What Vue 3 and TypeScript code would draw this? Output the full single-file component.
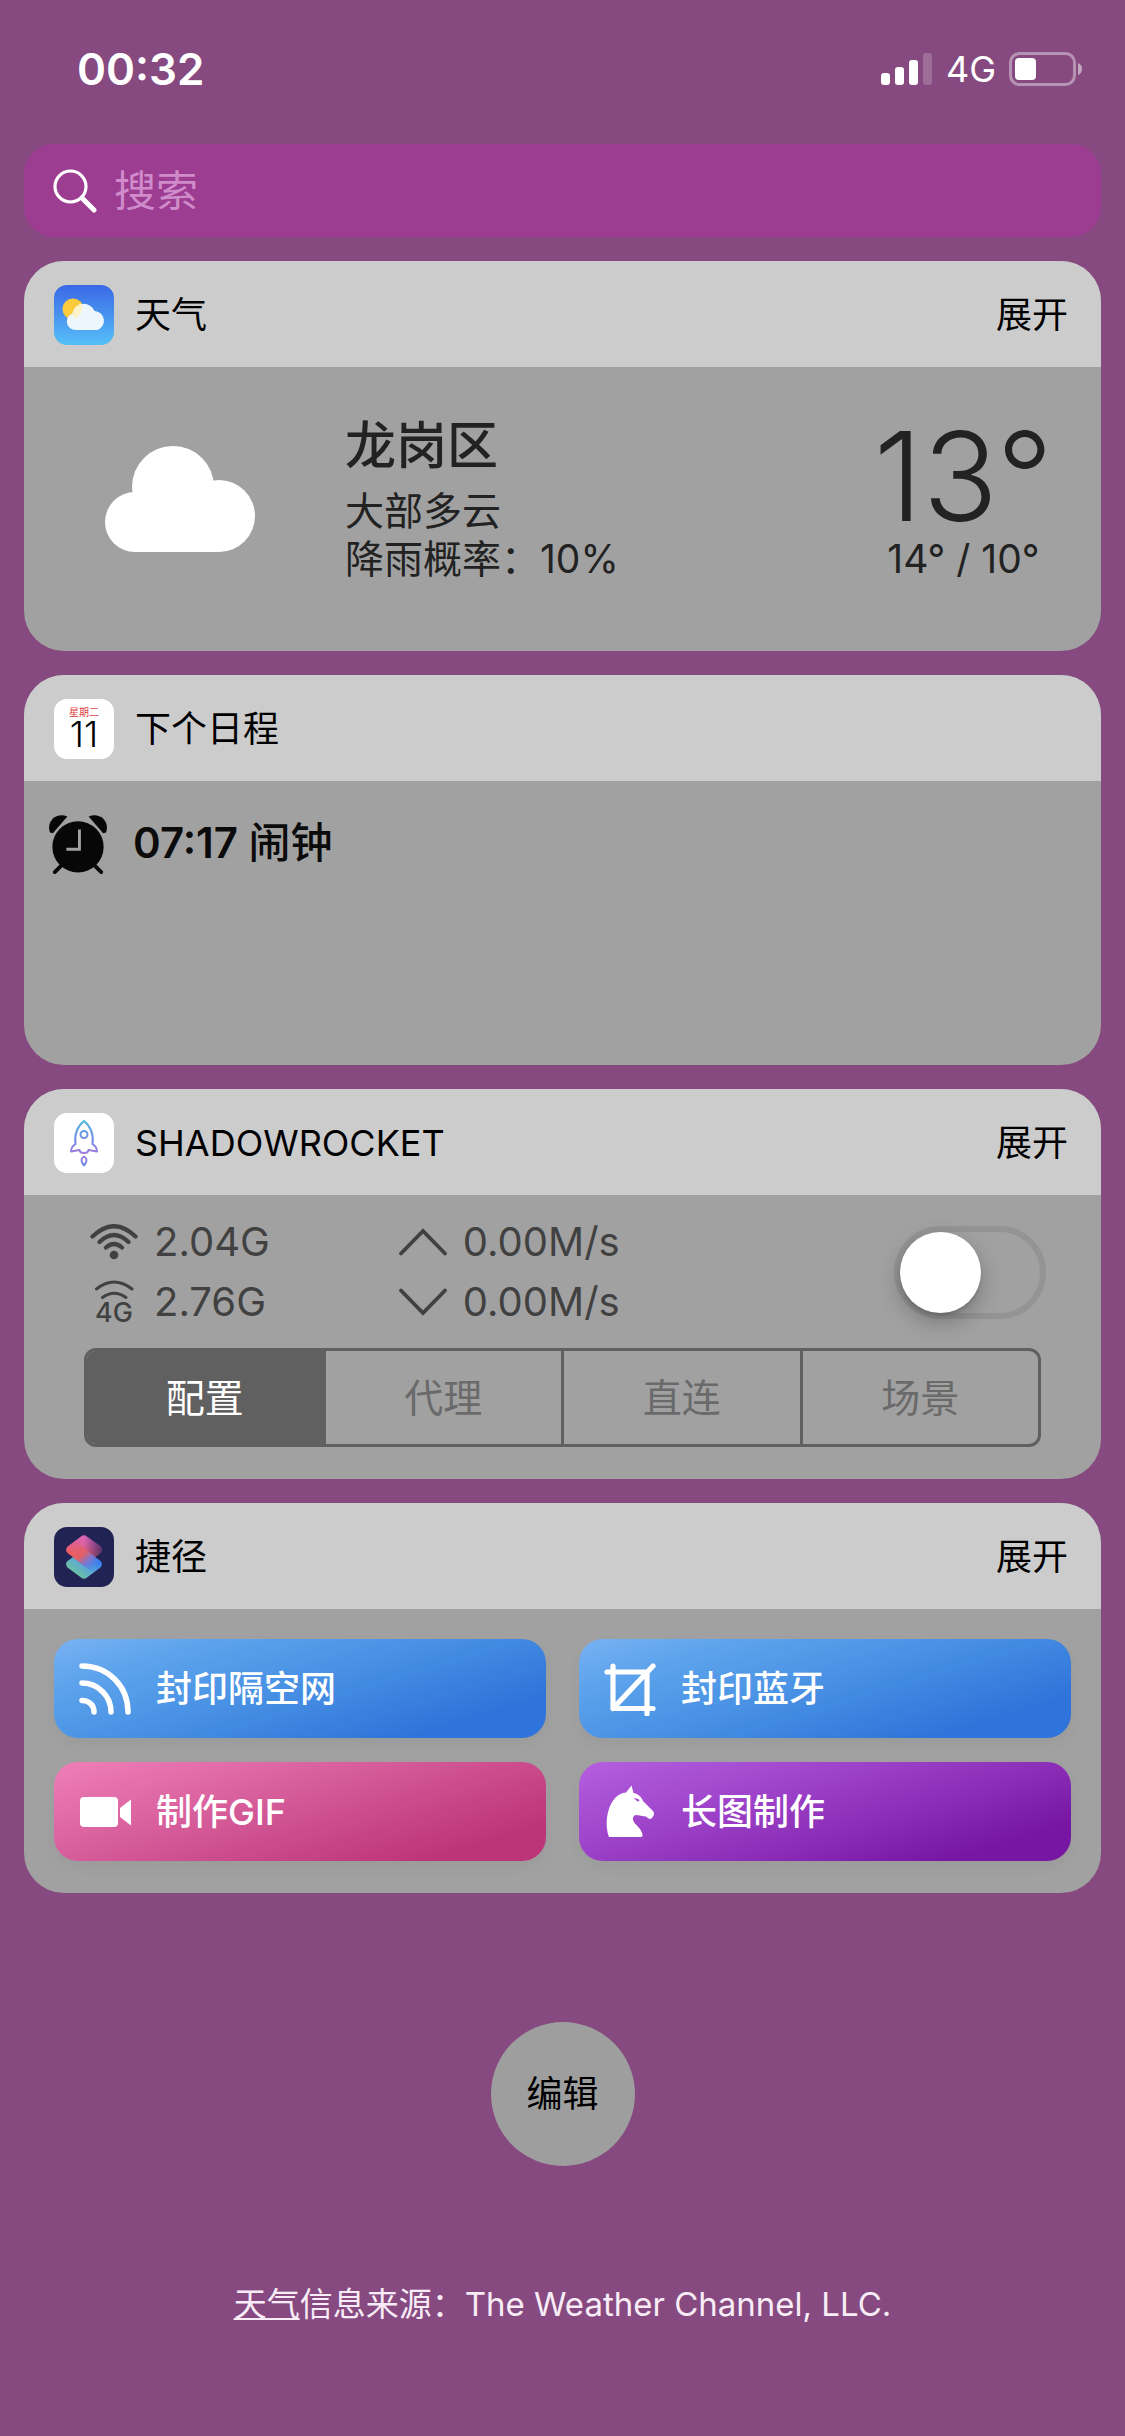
<script setup lang="ts">
import { ref } from 'vue'

interface Shortcut {
  label: string
  tone: string
  icon: string
}

const query = ref('')
const vpnOn = ref(false)
const mode = ref('配置')
const modes: string[] = ['配置', '代理', '直连', '场景']
const shortcuts: Shortcut[] = [
  { label: '封印隔空网', tone: 'blue', icon: 'waves' },
  { label: '封印蓝牙', tone: 'blue', icon: 'crop' },
  { label: '制作GIF', tone: 'pink', icon: 'video' },
  { label: '长图制作', tone: 'purple', icon: 'horse' },
]
</script>

<template>
  <div class="screen">
    <header class="status">
      <time class="clock">00:32</time>
      <div class="indicators">
        <svg width="52" height="32" viewBox="0 0 52 32" aria-hidden="true">
          <rect x="0" y="20" width="9" height="12" rx="3" fill="#fff" />
          <rect x="14" y="14" width="9" height="18" rx="3" fill="#fff" />
          <rect x="28" y="7" width="9" height="25" rx="3" fill="#fff" />
          <rect x="42" y="0" width="9" height="32" rx="3" fill="#fff" opacity=".2" />
        </svg>
        <span class="network">4G</span>
        <svg width="74" height="34" viewBox="0 0 74 34" aria-hidden="true">
          <rect x="1.5" y="1.5" width="64" height="31" rx="9" fill="none" stroke="#fff" stroke-opacity=".4" stroke-width="3" />
          <rect x="6" y="6" width="21" height="22" rx="4" fill="#fff" />
          <path d="M69 11q4 1.500 4 6t-4 6z" fill="#fff" opacity=".5" />
        </svg>
      </div>
    </header>

    <main class="widgets">
      <label class="search">
        <svg width="44" height="44" viewBox="0 0 44 44" aria-hidden="true">
          <circle cx="17.500" cy="17.500" r="15.500" fill="none" stroke="#fff" stroke-width="3.200" />
          <path d="M29 29l12 12" stroke="#fff" stroke-width="5" stroke-linecap="round" />
        </svg>
        <input v-model="query" type="search" placeholder="搜索" aria-label="搜索" />
      </label>

      <section class="card">
        <div class="card-head">
          <svg class="app-icon" viewBox="0 0 60 60" aria-hidden="true">
            <defs>
              <linearGradient id="sky" x1="0" y1="0" x2="0" y2="1">
                <stop offset="0" stop-color="#3a68e6" />
                <stop offset="1" stop-color="#56bff8" />
              </linearGradient>
            </defs>
            <rect width="60" height="60" rx="13" fill="url(#sky)" />
            <circle cx="19" cy="24" r="10.500" fill="#fccb3c" />
            <path d="M22 45a8.500 8.500 0 0 1-3.500-16.500A11.500 11.500 0 0 1 40.500 26A9.700 9.700 0 0 1 43 45z" fill="#eef6fd" />
            <path d="M18.500 28.500A11.500 11.500 0 0 1 28 18.500Q31 28 20.500 34z" fill="#fdf3c8" />
          </svg>
          <h2>天气</h2>
          <button type="button" class="expand">展开</button>
        </div>
        <div class="card-body weather">
          <svg class="cloud" width="150" height="106" viewBox="0 0 150 106" aria-hidden="true">
            <g fill="#fff">
              <circle cx="68" cy="41" r="41" />
              <circle cx="30" cy="76" r="30" />
              <circle cx="114" cy="70" r="36" />
              <path d="M28 50H112V106H28z" />
            </g>
          </svg>
          <div class="place">
            <h3>龙岗区</h3>
            <p>大部多云</p>
            <p>降雨概率：10%</p>
          </div>
          <div class="temps">
            <p class="now">13°</p>
            <p>14° / 10°</p>
          </div>
        </div>
      </section>

      <section class="card">
        <div class="card-head">
          <div class="app-icon calendar" aria-hidden="true">
            <span class="weekday">星期二</span>
            <span class="day">11</span>
          </div>
          <h2>下个日程</h2>
        </div>
        <div class="card-body agenda">
          <svg width="60" height="62" viewBox="0 0 62 62" aria-hidden="true">
            <g fill="#070707">
              <path d="M2 19C-2 8 8-2 20 2.500L5 20z" />
              <path d="M60 19C64 8 54-2 42 2.500L57 20z" />
              <circle cx="31" cy="34" r="26.500" />
            </g>
            <path d="M14 53l-7 7M48 53l7 7" stroke="#070707" stroke-width="4" stroke-linecap="round" />
            <path d="M32.500 16v20.500H19" fill="none" stroke="#a1a1a1" stroke-width="3" />
          </svg>
          <strong>07:17 <span>闹钟</span></strong>
        </div>
      </section>

      <section class="card">
        <div class="card-head">
          <svg class="app-icon" viewBox="0 0 60 60" aria-hidden="true">
            <defs>
              <linearGradient id="flame" gradientUnits="userSpaceOnUse" x1="0" y1="8" x2="0" y2="53">
                <stop offset="0" stop-color="#4fb6dc" />
                <stop offset=".5" stop-color="#7d84e6" />
                <stop offset=".75" stop-color="#a878dc" />
                <stop offset="1" stop-color="#6e8fe0" />
              </linearGradient>
            </defs>
            <rect width="60" height="60" rx="13" fill="#fff" />
            <g fill="none" stroke="url(#flame)" stroke-width="2" stroke-linejoin="round">
              <path d="M30 8C24 13 20 20 21.500 31Q17 34 17 38.500L25.500 37Q26 40 30 40T34.500 37L43 38.500Q43 34 38.500 31C40 20 36 13 30 8z" />
              <circle cx="30" cy="21.500" r="3.500" />
              <path d="M30 43.500q-5 3 0 9q5-6 0-9z" />
            </g>
          </svg>
          <h2>SHADOWROCKET</h2>
          <button type="button" class="expand">展开</button>
        </div>
        <div class="card-body rocket">
          <div class="traffic">
            <dl class="stats">
              <div>
                <dt>
                  <svg width="48" height="36" viewBox="0 0 48 36" aria-label="Wi-Fi">
                    <g fill="none" stroke="#414141" stroke-width="4.300" stroke-linecap="round">
                      <path d="M2.500 12.500Q24-8 45.500 12.500" />
                      <path d="M9.500 18Q24 4 38.500 18" />
                      <path d="M16 23.500Q24 16.500 32 23.500" />
                    </g>
                    <circle cx="24" cy="31" r="4.300" fill="#414141" />
                  </svg>
                </dt>
                <dd>2.04G</dd>
              </div>
              <div>
                <dt>
                  <svg width="48" height="54" viewBox="0 0 48 54" aria-label="4G">
                    <g fill="none" stroke="#414141" stroke-width="3" stroke-linecap="round">
                      <path d="M6.500 14Q24 0 42 14" />
                      <path d="M12.500 22.500Q24 14 36 22.500" />
                    </g>
                    <text x="24" y="47" text-anchor="middle" class="cell-label">4G</text>
                  </svg>
                </dt>
                <dd>2.76G</dd>
              </div>
            </dl>
            <dl class="stats rates">
              <div>
                <dt>
                  <svg width="50" height="28" viewBox="0 0 50 28" aria-label="上传">
                    <path d="M3 25.500L25 3l22 22.500" fill="none" stroke="#414141" stroke-width="3.800" stroke-linecap="round" />
                  </svg>
                </dt>
                <dd>0.00M/s</dd>
              </div>
              <div>
                <dt>
                  <svg width="50" height="28" viewBox="0 0 50 28" aria-label="下载">
                    <path d="M3 2.500L25 25l22-22.500" fill="none" stroke="#414141" stroke-width="3.800" stroke-linecap="round" />
                  </svg>
                </dt>
                <dd>0.00M/s</dd>
              </div>
            </dl>
            <input v-model="vpnOn" class="switch" type="checkbox" role="switch" aria-label="Shadowrocket" />
          </div>
          <div class="segments" role="group">
            <button
              v-for="m in modes"
              :key="m"
              type="button"
              :class="{ active: m === mode }"
              :aria-pressed="m === mode"
              @click="mode = m"
            >{{ m }}</button>
          </div>
        </div>
      </section>

      <section class="card">
        <div class="card-head">
          <svg class="app-icon" viewBox="0 0 60 60" aria-hidden="true">
            <defs>
              <linearGradient id="top-tile" x1=".15" y1=".8" x2=".55" y2="0">
                <stop offset="0" stop-color="#f05c50" />
                <stop offset=".5" stop-color="#e0608a" />
                <stop offset="1" stop-color="#d966c4" />
              </linearGradient>
              <linearGradient id="top-fade" x1=".5" y1="0" x2="1" y2="0">
                <stop offset="0" stop-color="#4a2c60" stop-opacity="0" />
                <stop offset="1" stop-color="#4a2c60" stop-opacity=".9" />
              </linearGradient>
              <linearGradient id="low-tile" x1=".3" y1=".9" x2=".9" y2=".3">
                <stop offset="0" stop-color="#6cc3a0" />
                <stop offset=".5" stop-color="#5aa6d8" />
                <stop offset="1" stop-color="#3377f0" />
              </linearGradient>
              <linearGradient id="ribbon" gradientUnits="userSpaceOnUse" x1="20" y1="18" x2="42" y2="42">
                <stop offset="0" stop-color="#ee6060" stop-opacity="0" />
                <stop offset=".4" stop-color="#e0606a" />
                <stop offset=".65" stop-color="#7a78d0" />
                <stop offset="1" stop-color="#357bf0" stop-opacity="0" />
              </linearGradient>
            </defs>
            <rect width="60" height="60" rx="13" fill="#202353" />
            <path d="M27 50.500L13.500 40.500Q10.500 37 13.500 34L27 24.500Q30 22.500 33 24.500L46.500 34Q49.500 37 46.500 40.500L33 50.500Q30 53 27 50.500z" fill="url(#low-tile)" />
            <path d="M27 9.500L13.500 19.500Q10.500 23 13.500 26L27 36Q30 38 33 36L46.500 26Q49.500 23 46.500 19.500L33 9.500Q30 7 27 9.500z" fill="url(#top-tile)" />
            <path d="M27 9.500L13.500 19.500Q10.500 23 13.500 26L27 36Q30 38 33 36L46.500 26Q49.500 23 46.500 19.500L33 9.500Q30 7 27 9.500z" fill="url(#top-fade)" />
            <path d="M13.500 26Q10.500 23 13.500 19.500L21 14L46.500 34Q49.500 37 46.500 40.500L39 46z" fill="url(#ribbon)" />
          </svg>
          <h2>捷径</h2>
          <button type="button" class="expand">展开</button>
        </div>
        <div class="card-body shortcuts">
          <button v-for="s in shortcuts" :key="s.label" type="button" class="shortcut" :class="s.tone">
            <svg width="54" height="54" viewBox="0 0 54 54" aria-hidden="true">
              <g v-if="s.icon === 'waves'" fill="none" stroke="#fff" stroke-width="5.500" stroke-linecap="round">
                <path d="M4 4C30 4 50 24 50 50" />
                <path d="M4 21C20 21 33 34 33 50" />
                <path d="M4 38.500C11 38.500 16 43 16 50" />
              </g>
              <g v-else-if="s.icon === 'crop'" fill="none" stroke="#fff" stroke-width="5.200" stroke-linecap="round" stroke-linejoin="round">
                <path d="M10 4V46.500H50M4 10H44V52M10 46.500L50 4" />
              </g>
              <g v-else-if="s.icon === 'video'" fill="#fff">
                <rect x="2" y="12" width="38" height="30" rx="4" />
                <path d="M42 23l11-8.500v26L42 32z" />
              </g>
              <path
                v-else
                fill="#fff"
                fill-rule="evenodd"
                d="M28.500.500l2 7.500c5 1 8 4 9.500 8l9.500 9.500c2 2 2 4.500 0 6.500-.5 2.500-4 2.500-6.500-.5-3 0-7-1.500-10.500-1.500-4 2-3 6 .5 9.500 4 4 7 8 6.500 11.500q0 1-2 1H6C0 36 6 9 23 7.500zM30.500 13l4 3.500 2-.5-1-2z"
              />
            </svg>
            <span>{{ s.label }}</span>
          </button>
        </div>
      </section>
    </main>

    <footer class="foot">
      <button type="button" class="edit">编辑</button>
      <p><a href="#">天气</a>信息来源：The Weather Channel, LLC.</p>
    </footer>
  </div>
</template>

<style>
body {
  margin: 0;
  background: #864a80;
}
</style>

<style scoped>
.screen {
  min-height: 100vh;
  box-sizing: border-box;
  padding: 0 24px;
  background: #864a80;
  font-family: Inter, "Noto Sans CJK SC", sans-serif;
  line-height: 60px;
  color: #000;
}
h2, h3, p, dl, dd {
  margin: 0;
  font-weight: 400;
}
button {
  margin: 0;
  padding: 0;
  border: 0;
  background: none;
  color: inherit;
  font: inherit;
  cursor: pointer;
}
svg {
  display: block;
  flex: none;
}
.status {
  height: 144px;
  box-sizing: border-box;
  padding: 0 18px 6px 53px;
  display: flex;
  align-items: center;
  justify-content: space-between;
  color: #fff;
}
.clock {
  font-size: 44px;
  font-weight: 600;
}
.indicators {
  display: flex;
  align-items: center;
  gap: 13px;
}
.network {
  font-size: 36px;
}
.widgets {
  display: flex;
  flex-direction: column;
  gap: 24px;
}
.search {
  height: 93px;
  display: flex;
  align-items: center;
  gap: 17px;
  padding: 0 29px;
  border-radius: 30px;
  background: #9c3d91;
}
.search input {
  flex: 1;
  min-width: 0;
  border: 0;
  padding: 0;
  outline: 0;
  background: none;
  color: #fff;
  font: inherit;
  font-size: 42px;
}
.search input::placeholder {
  color: #cf8bca;
  opacity: 1;
}
.card {
  border-radius: 40px;
  overflow: hidden;
  background: #a1a1a1;
}
.card-head {
  height: 106px;
  box-sizing: border-box;
  display: flex;
  align-items: flex-start;
  padding: 24px 33px 0 30px;
  background: #ccc;
}
.app-icon {
  width: 60px;
  height: 60px;
}
.card-head h2 {
  margin-left: 21px;
  flex: 1;
  font-size: 36px;
}
.expand {
  font-size: 36px;
}
.card-body {
  min-height: 284px;
  box-sizing: border-box;
}
.weather {
  display: flex;
  align-items: flex-start;
  padding: 50px 48px 0 81px;
  color: #222;
  font-size: 39px;
  line-height: 48px;
}
.cloud {
  margin-top: 29px;
}
.place {
  flex: 1;
  margin-left: 90px;
}
.place h3 {
  margin-bottom: 12px;
  font-size: 51px;
  font-weight: 500;
  line-height: 58px;
}
.temps {
  text-align: center;
}
.temps .now {
  font-size: 124px;
  font-weight: 300;
  line-height: 118px;
}
.calendar {
  display: flex;
  flex-direction: column;
  align-items: center;
  border-radius: 13px;
  background: #fff;
}
.weekday {
  margin-top: 7px;
  font-size: 10px;
  line-height: 12px;
  color: #e0393e;
}
.day {
  font-size: 36px;
  font-weight: 300;
  line-height: 32px;
}
.agenda {
  display: flex;
  align-items: flex-start;
  gap: 25px;
  padding: 32px 24px;
  color: #0b0b0b;
}
.agenda strong {
  font-size: 42px;
  font-weight: 600;
}
.agenda strong span {
  font-weight: 500;
}
.rocket {
  padding: 17px 55px 32px 60px;
}
.traffic {
  display: flex;
  align-items: center;
  color: #414141;
  font-size: 40px;
}
.stats div {
  display: flex;
  align-items: center;
  gap: 10px;
}
.stats dt {
  width: 60px;
  display: flex;
  justify-content: center;
}
.rates {
  flex: 1;
  margin-left: 123px;
}
.switch {
  appearance: none;
  width: 152px;
  height: 93px;
  margin: 0;
  border: 6px solid #949494;
  border-radius: 47px;
}
.switch::before {
  content: "";
  display: block;
  width: 81px;
  height: 81px;
  border-radius: 50%;
  background: #fff;
  box-shadow: 0 9px 22px rgba(0, 0, 0, .25), 0 3px 3px rgba(0, 0, 0, .12);
}
.switch:checked::before {
  margin-left: auto;
}
.segments {
  display: flex;
  height: 99px;
  box-sizing: border-box;
  margin: 16px 5px 0 0;
  border: 3px solid #606060;
  border-radius: 12px;
  overflow: hidden;
}
.segments button {
  flex: 1;
  color: #6a6a6a;
  font-size: 39px;
}
.segments button + button {
  border-left: 3px solid #606060;
}
.segments .active {
  background: #606060;
  color: #fff;
}
.shortcuts {
  display: grid;
  grid-template-columns: 1fr 1fr;
  align-content: start;
  gap: 24px 33px;
  padding: 30px;
}
.shortcut {
  height: 99px;
  display: flex;
  align-items: center;
  gap: 24px;
  padding: 0 24px;
  border-radius: 24px;
  box-shadow: 0 6px 15px rgba(0, 0, 0, .04);
  color: #fff;
  font-size: 36px;
  font-weight: 500;
}
.blue {
  background: linear-gradient(163deg, #78b2f2 0%, #5da3ec 20%, #468fe3 50%, #2f74da 83%, #2f74da 100%);
}
.pink {
  background: linear-gradient(163deg, #ef7fb7 0%, #e06aa6 25%, #cd4f8f 55%, #bd3579 85%, #bd3579 100%);
}
.purple {
  background: linear-gradient(163deg, #b55fe0 0%, #a44bd0 25%, #8f32bb 55%, #7616a3 85%, #7616a3 100%);
}
.foot {
  display: flex;
  flex-direction: column;
  align-items: center;
  padding-top: 129px;
}
.edit {
  width: 144px;
  height: 144px;
  border-radius: 50%;
  background: #9e9e9e;
  font-size: 36px;
}
.foot p {
  margin: 114px 0 60px;
  color: #f8ecf7;
  font-size: 33px;
  line-height: 48px;
}
.foot a {
  color: inherit;
  text-decoration-thickness: 2px;
  text-underline-offset: 2px;
  text-decoration-skip-ink: none;
}
.cell-label {
  fill: #414141;
  font-size: 27px;
  font-weight: 500;
}
</style>
